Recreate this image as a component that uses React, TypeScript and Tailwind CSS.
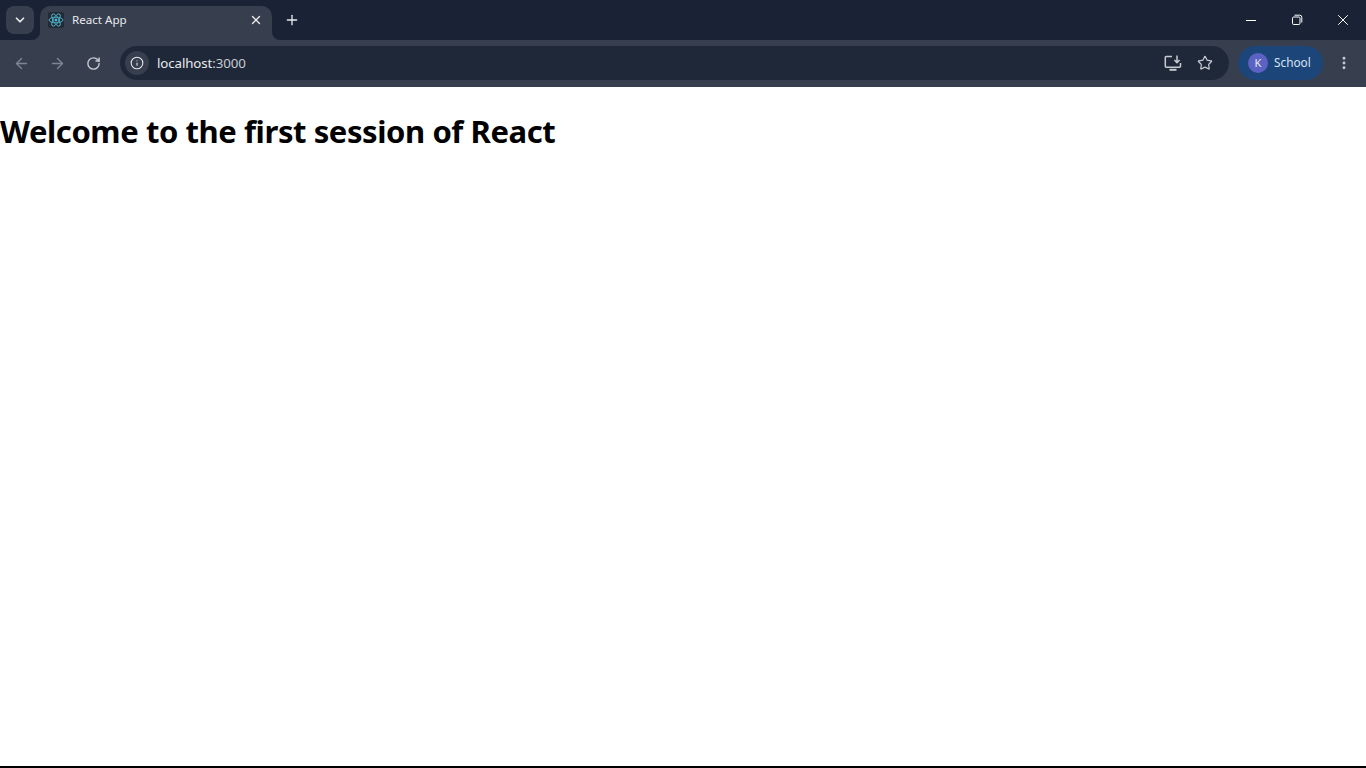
import { X, Plus, ChevronDown, ArrowLeft, ArrowRight, RotateCw, Info, Star, EllipsisVertical } from "lucide-react"

const STRIP = "#1a2235"
const TOOLBAR = "#373f4f"

function ReactLogo() {
  return (
    <div className="w-4 h-4 rounded-[2px] bg-[#222a35] flex items-center justify-center">
      <svg width="16" height="16" viewBox="-12 -12 24 24" fill="none" stroke="#4fb8d0" strokeWidth="1.3">
        <circle r="2.2" fill="#4fb8d0" stroke="none" />
        <ellipse rx="10.5" ry="4.2" />
        <ellipse rx="10.5" ry="4.2" transform="rotate(60)" />
        <ellipse rx="10.5" ry="4.2" transform="rotate(120)" />
      </svg>
    </div>
  )
}

function InstallIcon() {
  return (
    <svg width="18" height="18" viewBox="0 0 18 18" fill="none" stroke="#c7cad1" strokeWidth="1.5">
      <path d="M8 2.5H2.2a.9.9 0 0 0-.9.9v8.9a.9.9 0 0 0 .9.9h13.4a.9.9 0 0 0 .9-.9V9" />
      <path d="M5.5 15.8h7" strokeWidth="2" />
      <path d="M13 1.5v7M10.4 6l2.6 2.6L15.6 6" />
    </svg>
  )
}

function RestoreIcon() {
  return (
    <svg width="12" height="12" viewBox="0 0 12 12" fill="none" stroke="#ffffff" strokeWidth="1">
      <rect x="1.5" y="3" width="7.5" height="7.5" rx="1.2" />
      <path d="M3.5 1.2h5.3a2 2 0 0 1 2 2v5.3" />
    </svg>
  )
}

export default function App() {
  return (
    <div className="h-screen flex flex-col bg-white overflow-hidden">
      {/* tab strip */}
      <div className="h-10 flex items-end shrink-0" style={{ backgroundColor: STRIP }}>
        <div className="w-[28px] h-[28px] ml-[6px] mb-[6px] rounded-lg bg-[#373f4f] flex items-center justify-center">
          <ChevronDown size={14} strokeWidth={3} className="text-[#e6e8ec]" />
        </div>
        <div className="relative w-[232px] h-[34px] ml-[6px] rounded-t-[10px] bg-[#373f4f] flex items-center pl-2 pr-[9px] pb-[6px]">
          <span className="absolute left-[-8px] bottom-0 w-2 h-2 overflow-hidden">
            <span className="block w-4 h-4 rounded-full ml-[-8px] mt-[-8px] shadow-[0_0_0_8px_#373f4f]" />
          </span>
          <span className="absolute right-[-8px] bottom-0 w-2 h-2 overflow-hidden">
            <span className="block w-4 h-4 rounded-full mt-[-8px] shadow-[0_0_0_8px_#373f4f]" />
          </span>
          <ReactLogo />
          <span className="ml-2 flex-1 text-[11.6px] text-[#e8eaed] font-['Noto_Sans',sans-serif]">React App</span>
          <X size={14} strokeWidth={2.2} className="text-[#e8eaed]" />
        </div>
        <div className="ml-[6px] mb-[6px] w-7 h-7 flex items-center justify-center">
          <Plus size={16} strokeWidth={2} className="text-[#e8eaed]" />
        </div>
        <div className="ml-auto flex items-center h-10">
          <div className="w-[46px] flex justify-center"><div className="w-[10px] h-px bg-white" /></div>
          <div className="w-[46px] flex justify-center"><RestoreIcon /></div>
          <div className="w-[46px] flex justify-center"><X size={18} strokeWidth={1.3} className="text-white" /></div>
        </div>
      </div>

      {/* toolbar */}
      <div className="h-[47px] shrink-0 flex items-center pl-[3px] pb-[1px]" style={{ backgroundColor: TOOLBAR }}>
        <div className="w-9 flex justify-center"><ArrowLeft size={17} strokeWidth={2} className="text-[#7f858f]" /></div>
        <div className="w-9 flex justify-center"><ArrowRight size={17} strokeWidth={2} className="text-[#7f858f]" /></div>
        <div className="w-9 flex justify-center"><RotateCw size={15} strokeWidth={2.2} className="text-[#c7cad1]" /></div>
        <div className="w-[1109px] h-[34px] ml-[9px] shrink-0 rounded-full bg-[#1f2838] flex items-center pl-[5px] pr-[16px]">
          <div className="w-6 h-6 rounded-full bg-[#373f4f] flex items-center justify-center">
            <Info size={14} strokeWidth={1.8} className="text-[#e8eaed]" />
          </div>
          <span className="ml-2 flex-1 pt-px text-[13.3px] tracking-[-0.1px] text-[#c7cad1] font-['Noto_Sans',sans-serif]">
            <span className="text-[#e8eaed]">localhost</span>:3000
          </span>
          <InstallIcon />
          <Star size={16} strokeWidth={1.8} className="ml-[15px] text-[#c7cad1]" />
        </div>
        <div className="w-[85px] h-[34px] ml-[9px] shrink-0 rounded-full bg-[#1c4679] flex items-center pl-[10px]">
          <div className="w-5 h-5 rounded-full bg-[#5c62c4] flex items-center justify-center text-[11px] text-[#e8eaed] font-['Noto_Sans',sans-serif]">K</div>
          <span className="ml-[6px] text-[11.8px] text-[#d5e3f7] font-['Noto_Sans',sans-serif]">School</span>
        </div>
        <div className="w-[42px] shrink-0 flex justify-center"><EllipsisVertical size={16} strokeWidth={2.4} className="text-[#c7cad1]" /></div>
      </div>

      {/* page */}
      <div className="flex-1 min-h-0">
        <h1 className="mt-[21px] text-[31px] font-bold text-black leading-[46px] tracking-[-0.42px] font-['Noto_Sans',sans-serif]">
          Welcome to the first session of React
        </h1>
      </div>
      <div className="h-[2px] shrink-0 bg-black" />
    </div>
  )
}
